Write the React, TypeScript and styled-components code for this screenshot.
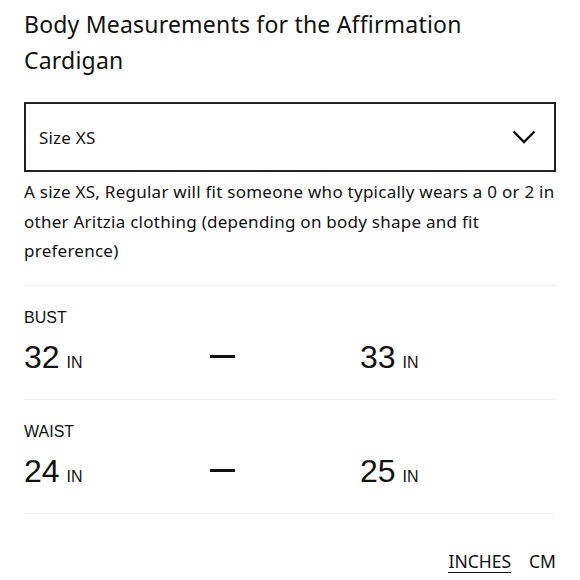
import { FC } from 'react';
import styled, { createGlobalStyle } from 'styled-components';

const GlobalStyle = createGlobalStyle`
  html, body {
    margin: 0;
    padding: 0;
    background: #ffffff;
  }
  body {
    font-family: 'Noto Sans', 'Liberation Sans', sans-serif;
    color: #111111;
  }
`;

const Page = styled.div`
  width: 580px;
  padding: 6px 24px 0;
  box-sizing: border-box;
`;

const Title = styled.h1`
  margin: 0;
  font-weight: 400;
  font-size: 23px;
  line-height: 36px;
  letter-spacing: 0.2px;
  color: #111111;
`;

const Select = styled.div`
  margin-top: 24px;
  height: 70px;
  border: 2px solid #222222;
  box-sizing: border-box;
  display: flex;
  align-items: center;
  justify-content: space-between;
  padding: 0 18px 0 13px;
  font-size: 17px;
  letter-spacing: 0.2px;
`;

const Description = styled.p`
  margin: 5px 0 0;
  font-size: 17px;
  line-height: 29.5px;
  letter-spacing: 0.25px;
  color: #111111;
`;

const Measurements = styled.div`
  margin-top: 19px;
`;

const Section = styled.div`
  padding: 22px 0 22px;
  border-top: 1px solid #eeeeee;
`;

const Label = styled.div`
  font-family: 'Liberation Sans', Arial, sans-serif;
  font-size: 16px;
  line-height: 20px;
  text-transform: uppercase;
`;

const Values = styled.div`
  margin-top: 9px;
  display: grid;
  grid-template-columns: 186px 150px auto;
  align-items: baseline;
  font-family: 'Liberation Sans', Arial, sans-serif;
`;

const Value = styled.span`
  font-size: 32px;
  line-height: 40px;
`;

const Unit = styled.span`
  margin-left: 7px;
  font-size: 16px;
`;

const Dash = styled.span`
  display: inline-block;
  width: 25px;
  height: 3px;
  background: #111111;
  transform: translateY(-10px);
`;

const Toggle = styled.div`
  border-top: 1px solid #eeeeee;
  padding-top: 37px;
  display: flex;
  justify-content: flex-end;
  gap: 18px;
  font-size: 17.5px;
  line-height: 20px;
`;

const ToggleItem = styled.span<{ $active?: boolean }>`
  padding-bottom: 1px;
  border-bottom: 1.5px solid ${({ $active }) => ($active ? '#111111' : 'transparent')};
`;

const Chevron: FC = () => (
  <svg width="24" height="14" viewBox="0 0 24 14" fill="none">
    <path d="M1.5 1.5 L12 12 L22.5 1.5" stroke="#111" strokeWidth="2.4" />
  </svg>
);

type Measure = { label: string; min: number; max: number };

const measures: Measure[] = [
  { label: 'Bust', min: 32, max: 33 },
  { label: 'Waist', min: 24, max: 25 },
];

export default function App() {
  return (
    <Page>
      <GlobalStyle />
      <Title>Body Measurements for the Affirmation Cardigan</Title>
      <Select>
        <span>Size XS</span>
        <Chevron />
      </Select>
      <Description>
        A size XS, Regular will fit someone who typically wears a 0 or 2 in other Aritzia clothing
        (depending on body shape and fit preference)
      </Description>
      <Measurements>
        {measures.map((m) => (
          <Section key={m.label}>
            <Label>{m.label}</Label>
            <Values>
              <span>
                <Value>{m.min}</Value>
                <Unit>IN</Unit>
              </span>
              <span>
                <Dash />
              </span>
              <span>
                <Value>{m.max}</Value>
                <Unit>IN</Unit>
              </span>
            </Values>
          </Section>
        ))}
      </Measurements>
      <Toggle>
        <ToggleItem $active>INCHES</ToggleItem>
        <ToggleItem>CM</ToggleItem>
      </Toggle>
    </Page>
  );
}
